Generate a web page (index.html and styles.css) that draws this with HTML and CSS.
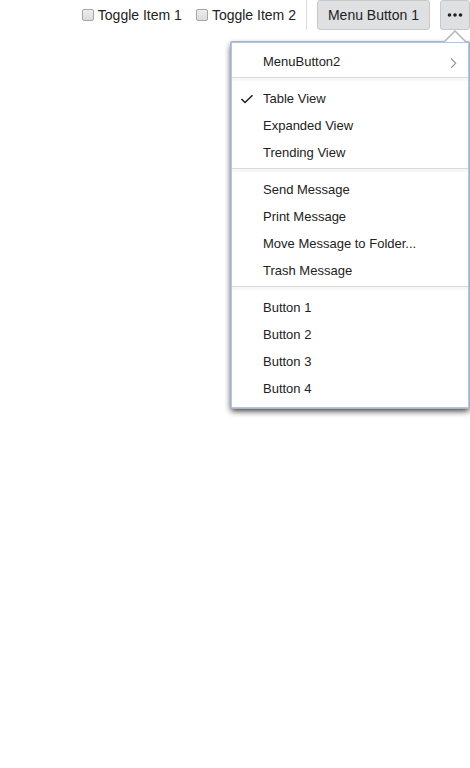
FILE: index.html
```
<!DOCTYPE html>
<html lang="en">
<head>
<meta charset="utf-8">
<title>Toolbar menu</title>
<link rel="stylesheet" href="styles.css">
</head>
<body>
<div class="toolbar" role="toolbar">
  <label class="toggle"><input class="toggle-box" type="checkbox">Toggle Item 1</label>
  <label class="toggle"><input class="toggle-box" type="checkbox">Toggle Item 2</label>
  <div class="buttons">
    <button class="button" type="button">Menu Button 1</button>
    <div class="more">
      <button class="button button-more" type="button" aria-label="More" aria-expanded="true">
        <svg width="16" height="4" viewBox="0 0 16 4" fill="#222"><circle cx="2.5" cy="2" r="1.8"/><circle cx="8" cy="2" r="1.8"/><circle cx="13.5" cy="2" r="1.8"/></svg>
      </button>
      <div class="dropdown">
        <svg class="arrow" width="24" height="12" viewBox="0 0 24 12"><path d="M1 12 12 1 23 12" fill="#fff" stroke="#b4b6b9" stroke-width="1.5"/></svg>
        <div class="menu" role="menu">
          <div class="group">
            <button class="item" type="button" role="menuitem">MenuButton2
              <svg class="chevron" width="7" height="14" viewBox="0 0 7 14"><path d="M1 3.5 5.7 8.2 1 12.9" fill="none" stroke="#999" stroke-width="1.2"/></svg>
            </button>
          </div>
          <div class="group">
            <button class="item" type="button" role="menuitemradio" aria-checked="true">
              <svg class="check" width="14" height="10" viewBox="0 0 14 10"><path d="M1.5 5 5 8.5 12.5 1.2" fill="none" stroke="#222" stroke-width="1.6"/></svg>Table View</button>
            <button class="item" type="button" role="menuitemradio">Expanded View</button>
            <button class="item" type="button" role="menuitemradio">Trending View</button>
          </div>
          <div class="group">
            <button class="item" type="button" role="menuitem">Send Message</button>
            <button class="item" type="button" role="menuitem">Print Message</button>
            <button class="item" type="button" role="menuitem">Move Message to Folder...</button>
            <button class="item" type="button" role="menuitem">Trash Message</button>
          </div>
          <div class="group">
            <button class="item" type="button" role="menuitem">Button 1</button>
            <button class="item" type="button" role="menuitem">Button 2</button>
            <button class="item" type="button" role="menuitem">Button 3</button>
            <button class="item" type="button" role="menuitem">Button 4</button>
          </div>
        </div>
      </div>
    </div>
  </div>
</div>
</body>
</html>
```
FILE: styles.css
```
* {
  box-sizing: border-box;
}

body {
  min-height: 100vh;
  margin: 0;
  background: #fff;
  color: #222;
  font-family: "Liberation Sans", Arial, sans-serif;
  font-size: 14px;
}

.toolbar {
  display: flex;
  justify-content: flex-end;
  height: 30px;
}

.toggle {
  display: flex;
  align-items: center;
  gap: 4px;
  margin-right: 10px;
  padding-left: 4px;
  white-space: nowrap;
}

.toggle-box {
  appearance: none;
  width: 12px;
  height: 12px;
  margin: 0;
  border: 1px solid #a5a5a5;
  border-radius: 2px;
  background: linear-gradient(#ededed, #dcdcdc);
}

.buttons {
  display: flex;
  gap: 10px;
  padding-left: 10px;
  border-left: 1px solid #dcdddf;
}

.button {
  display: flex;
  align-items: center;
  justify-content: center;
  height: 30px;
  padding: 0 10px;
  border: 1px solid #c6c8ca;
  border-radius: 3px;
  background: #dfe0e2;
  color: #222;
  font: inherit;
  white-space: nowrap;
}

.button-more {
  width: 30px;
  padding: 0;
}

.more {
  position: relative;
}

.dropdown {
  position: absolute;
  top: 41px;
  right: 0;
  width: 240px;
}

.arrow {
  position: absolute;
  z-index: 1;
  top: -11px;
  right: 3px;
}

.menu {
  padding: 5px 0;
  border: 1px solid #a9c5f4;
  border-radius: 1px;
  margin: 1px;
  background: #fff;
  box-shadow: 0 0 0 1px #b0b2b5, 0 3px 6px rgba(0, 0, 0, 0.8);
}

.group + .group {
  margin-top: 2px;
  padding-top: 7px;
  border-top: 1px solid #d8d9db;
  background: linear-gradient(#f7f7f7, #f7f7f7) top / 100% 3px no-repeat;
}

.item {
  position: relative;
  display: flex;
  align-items: center;
  width: 100%;
  height: 27px;
  padding: 0 15px 0 31px;
  border: 0;
  background: transparent;
  color: #222;
  font: inherit;
  font-size: 13px;
  text-align: left;
}

.chevron {
  margin-left: auto;
  margin-right: -4px;
}

.check {
  position: absolute;
  left: 8px;
}
```
